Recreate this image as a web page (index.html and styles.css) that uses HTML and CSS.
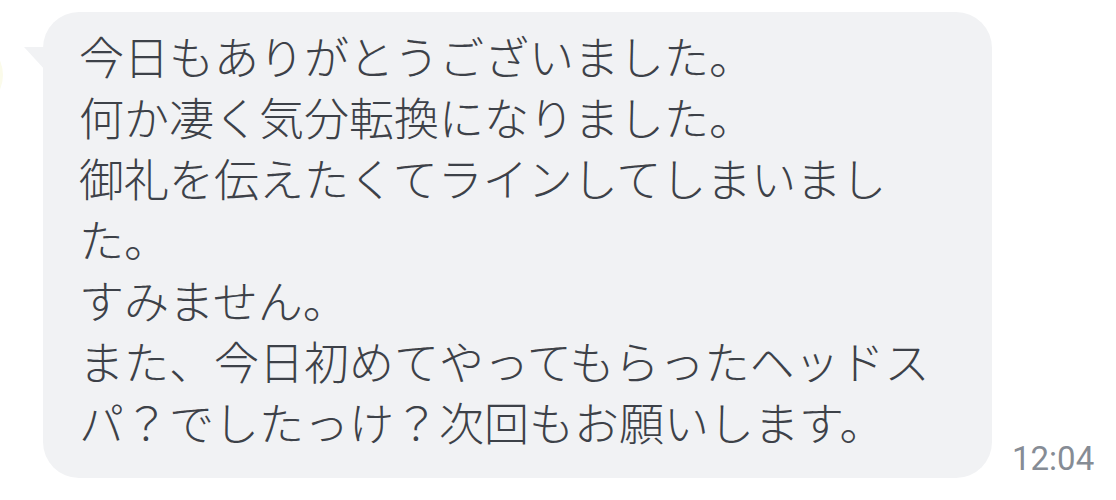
FILE: index.html
```html
<!DOCTYPE html>
<html lang="ja">
<head>
<meta charset="utf-8">
<link rel="stylesheet" href="styles.css">
</head>
<body>
<div class="row">
  <div class="avatar"></div>
  <div class="bubble">
    <p class="msg">今日もありがとうございました。<br>何か凄く気分転換になりました。<br>御礼を伝えたくてラインしてしまいました。<br>すみません。<br>また、今日初めてやってもらったヘッドスパ？でしたっけ？次回もお願いします。</p>
  </div>
  <div class="time">12:04</div>
</div>
</body>
</html>
```
FILE: styles.css
```css
html, body {
  margin: 0;
  padding: 0;
  background: #ffffff;
}
.row {
  display: flex;
  align-items: flex-end;
  padding-top: 12px;
}
.avatar {
  flex: none;
  width: 70px;
  height: 70px;
  margin-left: -67px;
  margin-right: 40px;
  align-self: flex-start;
  margin-top: 28px;
  border-radius: 50%;
  background: #fbfbea;
}
.bubble {
  position: relative;
  flex: none;
  box-sizing: border-box;
  width: 949px;
  height: 466px;
  background: #f1f2f4;
  border-radius: 36px;
  padding: 13px 30px 0 36px;
}
.bubble::before {
  content: "";
  position: absolute;
  left: -19px;
  top: 35px;
  width: 22px;
  height: 24px;
  background: #f1f2f4;
  clip-path: polygon(0 0, 100% 0, 100% 100%);
}
.msg {
  margin: 0;
  width: 872px;
  font-family: "Noto Sans CJK JP", "Noto Sans", sans-serif;
  font-size: 45px;
  font-weight: 300;
  line-height: 61px;
  color: #3d4148;
  line-break: strict;
}
.time {
  flex: none;
  margin-left: 20px;
  margin-bottom: 0;
  font-family: Roboto, "Liberation Sans", sans-serif;
  font-size: 33px;
  line-height: 38px;
  color: #868c95;
}
```
